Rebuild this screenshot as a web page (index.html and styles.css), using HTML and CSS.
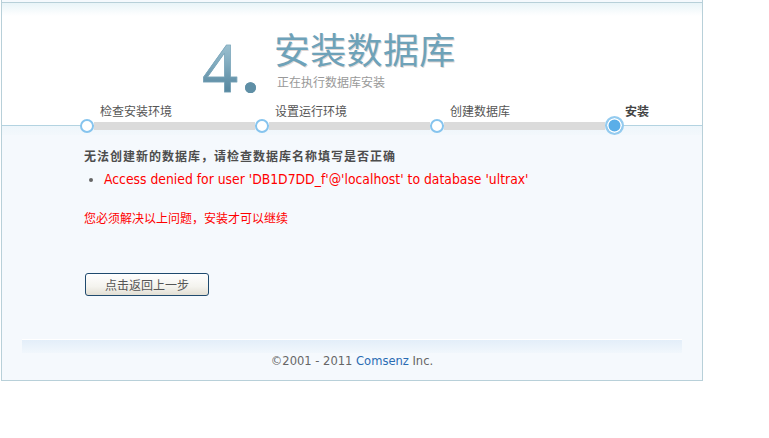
FILE: index.html
```html
<!DOCTYPE html>
<html lang="zh-CN">
<head>
<meta charset="utf-8">
<title>安装数据库</title>
<link rel="stylesheet" href="styles.css">
</head>
<body>
<div class="wrap">
  <div class="header">
    <div class="title">
      <span class="num">4<span class="period">.</span></span>
      <div class="title-text">
        <h1>安装数据库</h1>
        <p>正在执行数据库安装</p>
      </div>
    </div>
    <div class="step-labels">
      <span class="label">检查安装环境</span>
      <span class="label">设置运行环境</span>
      <span class="label">创建数据库</span>
      <span class="label current">安装</span>
    </div>
  </div>
  <div class="track">
    <span class="dot"></span><span class="bar"></span>
    <span class="dot"></span><span class="bar"></span>
    <span class="dot"></span><span class="bar"></span>
    <span class="dot active"></span>
  </div>
  <div class="main">
    <h2>无法创建新的数据库，请检查数据库名称填写是否正确</h2>
    <ul class="errors">
      <li>Access denied for user 'DB1D7DD_f'@'localhost' to database 'ultrax'</li>
    </ul>
    <p class="notice">您必须解决以上问题，安装才可以继续</p>
    <button class="btn" type="button">点击返回上一步</button>
  </div>
  <div class="footer">
    <div class="band"></div>
    <p class="copy">©2001 - 2011 <a class="brand" href="#">Comsenz</a> Inc.</p>
  </div>
</div>
</body>
</html>
```
FILE: styles.css
```css
html, body {
  margin: 0;
  padding: 0;
  background: #fff;
}
body {
  font-family: "DejaVu Sans", "Noto Sans CJK SC", sans-serif;
  font-size: 12px;
  color: #555;
}
.wrap {
  margin-left: 1px;
  width: 700px;
  padding-top: 2px;
  border-left: 1px solid #b8d0d9;
  border-right: 1px solid #b8d0d9;
  border-bottom: 1px solid #b8d0d9;
  background: #f5f9fd;
}
.header {
  border-top: 1px solid #b8d0d9;
  background: linear-gradient(to bottom, #e9f4f8 0, #ffffff 13px);
  padding-top: 22px;
}
.title {
  display: flex;
  height: 79px;
  padding-left: 200px;
}
.num {
  font-family: "Liberation Serif", serif;
  font-size: 72px;
  line-height: 72px;
  background: linear-gradient(to bottom, #b4d3df 0%, #86afc2 45%, #5a8aa2 80%, #4f8199 100%);
  -webkit-background-clip: text;
  background-clip: text;
  color: transparent;
  -webkit-text-stroke: 0.6px #7aa5b9;
}
.period {
  font-size: 92px;
  margin-left: 1px;
  -webkit-text-stroke: 0;
  color: #5f8fa6;
}
.title-text {
  margin-left: 12px;
}
.title-text h1 {
  margin: 5px 0 0 0;
  font-family: "Noto Sans CJK SC", serif;
  font-size: 36px;
  font-weight: normal;
  line-height: 36px;
  color: #6ea2b9;
  text-shadow: 1px 1px 0 rgba(170, 140, 130, 0.35);
  letter-spacing: 0.3px;
}
.title-text p {
  margin: 9px 0 0 3px;
  font-family: "Noto Sans CJK SC", sans-serif;
  font-size: 12px;
  line-height: 14px;
  color: #999;
}
.step-labels {
  display: flex;
  padding-left: 98px;
  margin-bottom: -2px;
  position: relative;
}
.label {
  flex: none;
  width: 175px;
  font-family: "Noto Sans CJK SC", sans-serif;
  font-size: 12px;
  line-height: 14px;
  color: #555;
}
.label.current {
  width: auto;
  font-weight: bold;
  color: #444;
}
.track {
  display: flex;
  align-items: center;
  height: 19px;
  padding-left: 78px;
  background: linear-gradient(to bottom, #ffffff 0, #ffffff 9px, #b3d3e1 9px, #b3d3e1 10px, #eef6fb 10px, #f3f8fc 19px);
}
.dot {
  box-sizing: border-box;
  width: 14px;
  height: 14px;
  border: 2px solid #86c4ee;
  border-radius: 50%;
  background: #fff;
  flex: none;
}
.dot.active {
  width: 19px;
  height: 19px;
  border: 2px solid #94cbef;
  background: #5aaee8;
  box-shadow: inset 0 0 0 1.5px #fff;
}
.bar {
  width: 161px;
  height: 8px;
  background: #dbdbdb;
  flex: none;
}
.main {
  padding: 14px 0 43px 82px;
}
.main h2 {
  margin: 0;
  font-family: "Noto Sans CJK SC", sans-serif;
  font-size: 12px;
  line-height: 14px;
  font-weight: bold;
  letter-spacing: 1px;
  color: #4d4d4d;
}
.errors {
  margin: 7px 0 0 0;
  padding-left: 20px;
}
.errors li {
  font-family: "DejaVu Sans Condensed", "DejaVu Sans", sans-serif;
  font-size: 13.8px;
  line-height: 18px;
  color: #f00;
}
.errors li::marker {
  color: #666;
}
.notice {
  margin: 23px 0 0 0;
  font-family: "Noto Sans CJK SC", sans-serif;
  font-size: 12px;
  line-height: 14px;
  color: #f00;
}
.btn {
  display: block;
  margin: 48px 0 0 1px;
  width: 124px;
  height: 23px;
  padding: 0;
  border: 1px solid #1f4a6e;
  border-radius: 3px;
  background: linear-gradient(to bottom, #ffffff 0%, #f4f3ee 60%, #e2dfd4 100%);
  font-family: "Noto Sans CJK SC", sans-serif;
  font-size: 12px;
  line-height: 20px;
  color: #555;
}
.footer {
  padding-bottom: 11px;
}
.band {
  margin: 0 20px;
  height: 13px;
  border-top: 1px solid #fff;
  background: linear-gradient(to bottom, #e3eef9 0, #f1f7fc 100%);
}
.copy {
  margin: 0;
  text-align: center;
  font-family: "DejaVu Sans Condensed", "DejaVu Sans", sans-serif;
  font-size: 12.8px;
  line-height: 16px;
  color: #666;
}
.brand {
  color: #2a6bb3;
  text-decoration: none;
}
```
